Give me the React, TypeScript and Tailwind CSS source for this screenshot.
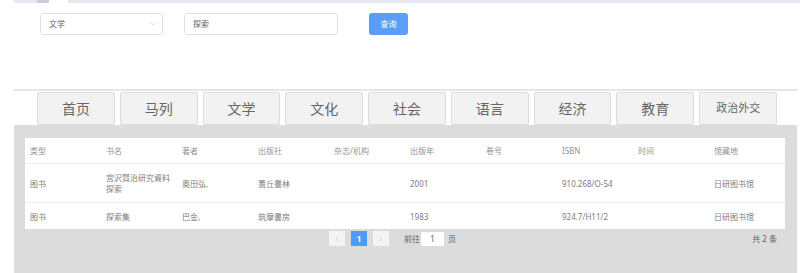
import { ChevronDown, ChevronLeft, ChevronRight } from "lucide-react";

const tabs = ["首页", "马列", "文学", "文化", "社会", "语言", "经济", "教育", "政治外交"];

const columns = ["类型", "书名", "著者", "出版社", "杂志/机构", "出版年", "卷号", "ISBN", "时间", "馆藏地"];

const rows = [
    ["图书", "宫沢賢治研究資料探索", "奥田弘,", "蓍丘書林", "", "2001", "", "910.268/O-54", "", "日研图书馆"],
    ["图书", "探索集", "巴金,", "筑摩書房", "", "1983", "", "924.7/H11/2", "", "日研图书馆"],
];

export default function App() {
    return (
        <div className="w-[800px] h-[273px] overflow-hidden bg-white font-['Noto_Sans','Noto_Sans_CJK_SC',sans-serif]">
            {/* scrolled-off header edge */}
            <div className="ml-[14px] h-[3px] flex bg-[#e4e7ed]">
                <div className="ml-[23px] w-[12px] bg-[#c9cdd4]" />
                <div className="w-[19px] bg-white" />
            </div>

            {/* search row */}
            <div className="mt-[10px] flex items-center h-[22px]">
                <div className="ml-[40px] w-[123px] h-[22px] rounded-[3px] border border-[#dcdfe6] flex items-center justify-between pl-[8px] pr-[4px]">
                    <span className="text-[8px] text-[#606266]">文学</span>
                    <ChevronDown size={10} strokeWidth={1.5} className="text-[#c0c4cc]" />
                </div>
                <div className="ml-[21px] w-[154px] h-[22px] rounded-[3px] border border-[#dcdfe6] flex items-center pl-[8px]">
                    <span className="text-[8px] text-[#606266]">探索</span>
                </div>
                <button className="ml-[31px] w-[39px] h-[22px] rounded-[3px] bg-[#5b9ef8] text-white text-[8px]">
                    查询
                </button>
            </div>

            {/* category tabs */}
            <div className="ml-[14px] mr-[3px] mt-[54px] border-t-2 border-[#e6e6e6] pt-[1px] pl-[23px] pr-[20px] flex gap-[5px]">
                {tabs.map((t) => (
                    <div
                        key={t}
                        className={`flex-1 h-[33px] rounded-[2px] border border-[#dcdcdc] bg-[#f2f2f2] flex items-center justify-center text-[#666] ${
                            t.length > 2 ? "text-[11px]" : "text-[14px]"
                        }`}
                    >
                        {t}
                    </div>
                ))}
            </div>

            {/* result area */}
            <div className="ml-[14px] mr-[3px] h-[148px] bg-[#dcdcdc] pt-[13px] pl-[11px] pr-[12px]">
                <div className="bg-white">
                    <div className="grid grid-cols-10 h-[26px] items-center border-b border-[#ebeef5] text-[8px] text-[#909399]">
                        {columns.map((c) => (
                            <div key={c} className="pl-[5px]">
                                {c}
                            </div>
                        ))}
                    </div>
                    {rows.map((r, i) => (
                        <div
                            key={i}
                            className={`grid grid-cols-10 items-center text-[8px] leading-[11px] text-[#7d7d7d] ${
                                i === 0 ? "h-[39px] border-b border-[#ebeef5]" : "h-[26px]"
                            }`}
                        >
                            {r.map((c, j) => (
                                <div key={j} className="pl-[5px] pr-[5px]">
                                    {c}
                                </div>
                            ))}
                        </div>
                    ))}
                </div>

                {/* pagination */}
                <div className="mt-[2px] h-[15px] flex items-center text-[8px] text-[#606266]">
                    <div className="ml-[304px] w-[16px] h-[15px] bg-[#f4f4f5] flex items-center justify-center">
                        <ChevronLeft size={8} className="text-[#c0c4cc]" />
                    </div>
                    <div className="ml-[6px] w-[16px] h-[15px] bg-[#4c9bf8] text-white font-bold flex items-center justify-center">
                        1
                    </div>
                    <div className="ml-[6px] w-[16px] h-[15px] bg-[#f4f4f5] flex items-center justify-center">
                        <ChevronRight size={8} className="text-[#c0c4cc]" />
                    </div>
                    <span className="ml-[15px]">前往</span>
                    <div className="ml-[1px] w-[23px] h-[14px] bg-white rounded-[2px] flex items-center justify-center">
                        1
                    </div>
                    <span className="ml-[4px]">页</span>
                    <span className="ml-auto mr-[8px]">共 2 条</span>
                </div>
            </div>
        </div>
    );
}
